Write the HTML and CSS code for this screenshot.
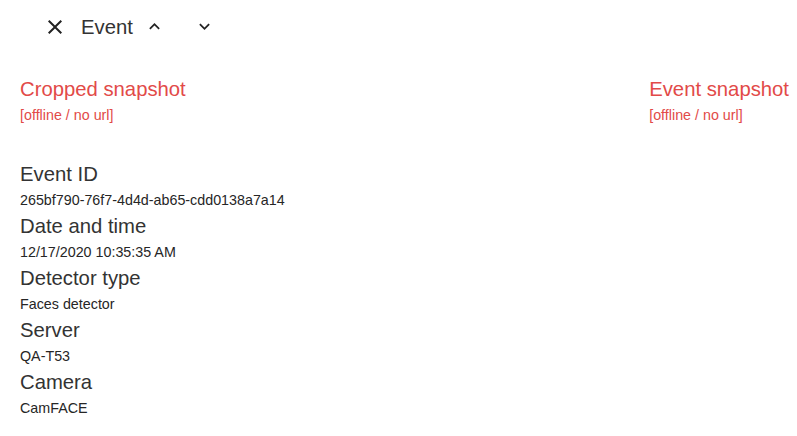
FILE: index.html
```html
<!DOCTYPE html>
<html lang="en">
<head>
<meta charset="utf-8">
<title>Event</title>
<link rel="stylesheet" href="styles.css">
</head>
<body>
<div class="panel">
  <header class="toolbar">
    <button class="icon-btn close-btn" aria-label="Close">
      <svg width="24" height="24" viewBox="0 0 24 24"><path d="M19 6.41 17.59 5 12 10.59 6.41 5 5 6.41 10.59 12 5 17.59 6.41 19 12 13.41 17.59 19 19 17.59 13.41 12z"/></svg>
    </button>
    <span class="title">Event</span>
    <div class="nav">
      <button class="icon-btn" aria-label="Previous">
        <svg width="21" height="21" viewBox="0 0 24 24"><path d="M12 8l-6 6 1.41 1.41L12 10.83l4.59 4.58L18 14z"/></svg>
      </button>
      <button class="icon-btn" aria-label="Next">
        <svg width="21" height="21" viewBox="0 0 24 24"><path d="M16.59 8.59 12 13.17 7.41 8.59 6 10l6 6 6-6z"/></svg>
      </button>
    </div>
  </header>

  <section class="snapshots">
    <div class="snapshot">
      <div class="snap-title">Cropped snapshot</div>
      <div class="snap-note">[offline / no url]</div>
    </div>
    <div class="snapshot">
      <div class="snap-title">Event snapshot</div>
      <div class="snap-note">[offline / no url]</div>
    </div>
  </section>

  <dl class="fields">
    <dt>Event ID</dt>
    <dd>265bf790-76f7-4d4d-ab65-cdd0138a7a14</dd>
    <dt>Date and time</dt>
    <dd>12/17/2020 10:35:35 AM</dd>
    <dt>Detector type</dt>
    <dd>Faces detector</dd>
    <dt>Server</dt>
    <dd>QA-T53</dd>
    <dt>Camera</dt>
    <dd>CamFACE</dd>
  </dl>
</div>
</body>
</html>
```

FILE: styles.css
```css
html, body {
  margin: 0;
  padding: 0;
  background: #ffffff;
}

body {
  font-family: "Liberation Sans", Arial, sans-serif;
  color: #333333;
}

.panel {
  width: 797px;
}

.toolbar {
  display: flex;
  align-items: center;
  height: 53px;
  padding-left: 35px;
}

.icon-btn {
  display: flex;
  align-items: center;
  justify-content: center;
  width: 40px;
  height: 40px;
  padding: 0;
  border: 0;
  background: transparent;
  cursor: pointer;
}

.icon-btn svg {
  fill: #222222;
}

.title {
  margin-left: 6px;
  margin-right: 2px;
  font-size: 20.3px;
  line-height: 26px;
  color: #333333;
}

.nav {
  display: flex;
  gap: 10px;
}

.snapshots {
  display: flex;
  justify-content: space-between;
  margin-top: 23px;
  padding: 0 8px 0 20px;
}

.snap-title {
  font-size: 20.3px;
  line-height: 26px;
  color: #e24a48;
}

.snap-note {
  font-size: 14.3px;
  line-height: 26px;
  color: #e24a48;
}

.fields {
  margin: 33px 0 0 0;
  padding-left: 20px;
}

.fields dt {
  font-size: 20.3px;
  line-height: 26px;
  color: #333333;
}

.fields dd {
  margin: 0;
  font-size: 14.3px;
  line-height: 26px;
  color: #262626;
}
```
